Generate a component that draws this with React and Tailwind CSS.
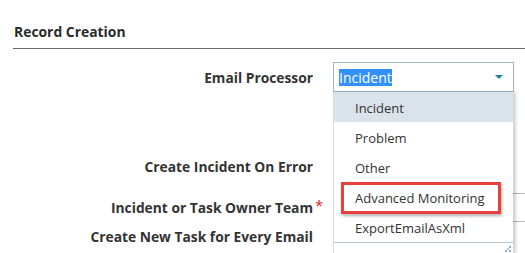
import React from 'react';

const options = ['Incident', 'Problem', 'Other', 'Advanced Monitoring', 'ExportEmailAsXml'];

function ResizeGrip() {
  return (
    <svg width="7" height="7" viewBox="0 0 7 7" className="block">
      <rect x="5" y="1" width="2" height="2" fill="#7fb0d8" />
      <rect x="1" y="5" width="2" height="2" fill="#7fb0d8" />
      <rect x="5" y="5" width="2" height="2" fill="#7fb0d8" />
      <rect x="3" y="3" width="2" height="2" fill="#a9cbe6" />
    </svg>
  );
}

export default function App() {
  return (
    <div className="relative w-[525px] h-[253px] overflow-hidden bg-white font-['Open_Sans',sans-serif] text-[#333]">
      <div className="pl-[14px] pt-[23px] text-[13.9px] leading-[18px] font-bold text-[#2b2b2b]">Record Creation</div>
      <div className="ml-[13px] mt-[7px] border-t-[1.5px] border-[#6b6b6b]" />

      {/* Email Processor */}
      <div className="flex items-center mt-[13px] h-[30px]">
        <div className="w-[313px] shrink-0 text-right text-[13.8px] font-bold pt-[2px]">Email Processor</div>
        <div className="ml-[20px] w-[181px] shrink-0 h-[30px] border border-[#9fb7c6] flex items-center pl-[5px] pr-[10px]">
          <span className="bg-[#3390ff] text-white text-[14px] leading-[17px]">Incident</span>
          <span className="ml-auto w-0 h-0 border-l-[4px] border-r-[4px] border-t-[4px] border-l-transparent border-r-transparent border-t-[#17819e]" />
        </div>
      </div>

      {/* Create Incident On Error */}
      <div className="flex items-center mt-[59px] h-[30px]">
        <div className="w-[313px] shrink-0 text-right text-[13.8px] font-bold pt-[2px]">Create Incident On Error</div>
      </div>

      {/* Incident or Task Owner Team */}
      <div className="flex items-center mt-[12px] h-[28px]">
        <div className="w-[313px] shrink-0 text-right text-[13.8px] font-bold relative pt-[2px]">
          Incident or Task Owner Team
          <span className="absolute -right-[10px] -top-[1px] text-[#e02020] font-normal text-[14px]">*</span>
        </div>
        <div className="ml-[20px] w-[220px] shrink-0 h-[29px] border-y border-[#b9b9b9]" />
      </div>

      {/* Create New Task for Every Email */}
      <div className="flex items-center mt-[1px] h-[30px]">
        <div className="w-[313px] shrink-0 text-right text-[13.8px] font-bold">Create New Task for Every Email</div>
      </div>

      {/* dropdown list */}
      <div className="absolute left-[333px] top-[92px] w-[180px] bg-white border-l border-[#d5dde3] shadow-[3px_0_3px_rgba(0,0,0,0.18)]">
        {options.map((o, i) => (
          <div
            key={o}
            className={`h-[30px] flex items-center pl-[21px] pt-[3px] text-[13px] text-[#333] ${i === 0 ? 'bg-[#dae3ea]' : ''}`}
          >
            {o}
          </div>
        ))}
        <div className="h-[12px] border-t border-[#b3c6d3] flex justify-end items-end pr-[2px] pb-[2px]">
          <ResizeGrip />
        </div>
      </div>

      {/* annotation */}
      <div className="absolute left-[341px] top-[182px] w-[160px] h-[32px] border-[3px] border-[#e8403f] shadow-[1px_2px_3px_rgba(0,0,0,0.3)]" />
    </div>
  );
}
